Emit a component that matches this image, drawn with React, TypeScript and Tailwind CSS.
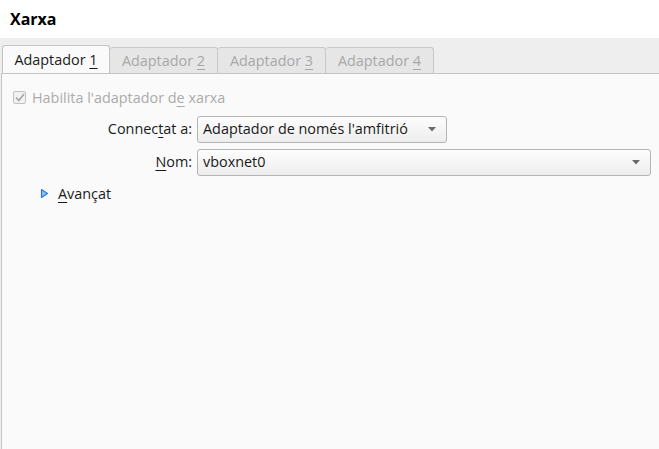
import React from "react";

const FONT = "font-['Open_Sans','Noto_Sans',sans-serif]";

function Mnemonic({ children }: { children: React.ReactNode }) {
  return <span className="underline decoration-1 underline-offset-[3px]">{children}</span>;
}

function Tab({ active, label, mn }: { active?: boolean; label: string; mn: string }) {
  if (active) {
    return (
      <div className="-mb-px flex h-[29px] w-[108px] items-center justify-center rounded-t-[3px] border border-b-0 border-[#c4c4c4] bg-[#fafafa] text-[#1a1a1a]">
        <span>
          {label} <Mnemonic>{mn}</Mnemonic>
        </span>
      </div>
    );
  }
  return (
    <div className="flex h-[26px] w-[108px] items-center justify-center rounded-t-[3px] border border-b-0 border-l-0 border-[#c8c8c8] bg-[#e6e6e6] text-[#a8a8a8]">
      <span>
        {label} <Mnemonic>{mn}</Mnemonic>
      </span>
    </div>
  );
}

function Combo({ value, wide }: { value: string; wide?: boolean }) {
  return (
    <div
      className={`flex h-[27px] items-center justify-between rounded-[3px] border border-[#b4b4b4] bg-gradient-to-b from-[#fdfdfd] to-[#ededed] pl-[5px] pr-[10px] text-[#1a1a1a] ${
        wide ? "w-[454px]" : "w-[250px]"
      }`}
    >
      <span>{value}</span>
      <svg width="8" height="5" viewBox="0 0 8 5">
        <path d="M0 0h8L4 4.5z" fill="#6a6a6a" />
      </svg>
    </div>
  );
}

export default function App() {
  return (
    <main className={`flex h-[449px] w-[659px] flex-col overflow-hidden bg-[#eeeeee] text-[14.4px] ${FONT}`}>
      <header className="flex h-[38px] items-center bg-white pl-[10px]">
        <h1 className="text-[16px] font-bold text-black">Xarxa</h1>
      </header>

      <div className="flex items-end pl-[2px] pt-[7px]">
        <Tab active label="Adaptador" mn="1" />
        <Tab label="Adaptador" mn="2" />
        <Tab label="Adaptador" mn="3" />
        <Tab label="Adaptador" mn="4" />
      </div>

      <section className="ml-[1px] flex flex-1 flex-col border-l border-t border-[#c4c4c4] bg-[#fafafa] pt-[13px]">
        <label className="flex items-center gap-[6px] pl-[11px] text-[#ababab]">
          <span className="flex h-[13px] w-[13px] items-center justify-center rounded-[2px] border border-[#c0c0c0] bg-[#f2f2f2]">
            <svg width="10" height="9" viewBox="0 0 10 9">
              <path d="M1 4.5l2.8 3L9 1" fill="none" stroke="#a6a6a6" strokeWidth="1.6" />
            </svg>
          </span>
          <span>
            Habilita l'adaptador d<Mnemonic>e</Mnemonic> xarxa
          </span>
        </label>

        <div className="mt-[7px] grid grid-cols-[193px_auto] items-center gap-x-[2px] gap-y-[6px] text-[#1a1a1a]">
          <span className="pr-[3px] text-right">
            Connec<Mnemonic>t</Mnemonic>at a:
          </span>
          <Combo value="Adaptador de només l'amfitrió" />
          <span className="pr-[3px] text-right">
            <Mnemonic>N</Mnemonic>om:
          </span>
          <Combo value="vboxnet0" wide />
        </div>

        <div className="mt-[7px] flex items-center gap-[9px] pl-[38px] text-[#1a1a1a]">
          <svg width="9" height="11" viewBox="0 0 9 11">
            <path d="M1.5 1.5l6 4-6 4z" fill="#8fc0f2" stroke="#2f7ad6" strokeWidth="1.2" strokeLinejoin="round" />
          </svg>
          <span>
            <Mnemonic>A</Mnemonic>vançat
          </span>
        </div>
      </section>
    </main>
  );
}
